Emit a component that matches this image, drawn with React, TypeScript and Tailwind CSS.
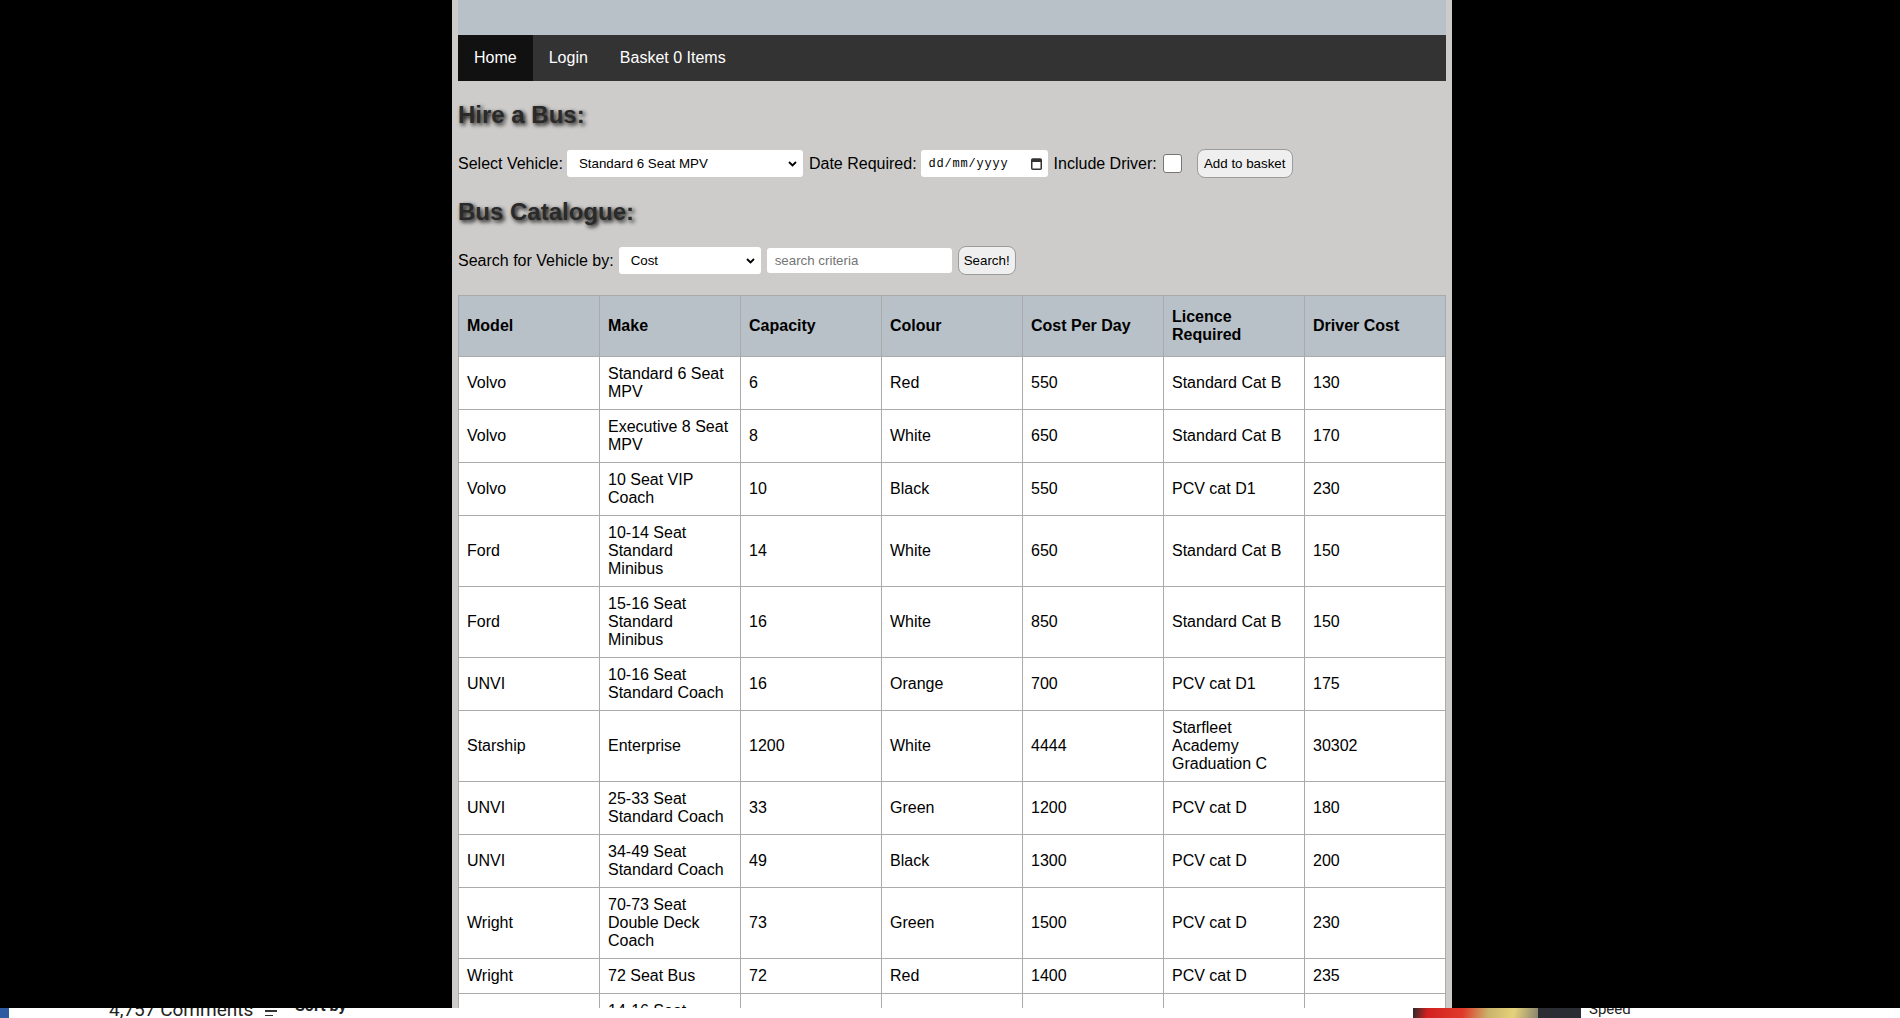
const buses = [
  ["Volvo", "Standard 6 Seat MPV", "6", "Red", "550", "Standard Cat B", "130"],
  ["Volvo", "Executive 8 Seat MPV", "8", "White", "650", "Standard Cat B", "170"],
  ["Volvo", "10 Seat VIP Coach", "10", "Black", "550", "PCV cat D1", "230"],
  ["Ford", "10-14 Seat Standard Minibus", "14", "White", "650", "Standard Cat B", "150"],
  ["Ford", "15-16 Seat Standard Minibus", "16", "White", "850", "Standard Cat B", "150"],
  ["UNVI", "10-16 Seat Standard Coach", "16", "Orange", "700", "PCV cat D1", "175"],
  ["Starship", "Enterprise", "1200", "White", "4444", "Starfleet Academy Graduation C", "30302"],
  ["UNVI", "25-33 Seat Standard Coach", "33", "Green", "1200", "PCV cat D", "180"],
  ["UNVI", "34-49 Seat Standard Coach", "49", "Black", "1300", "PCV cat D", "200"],
  ["Wright", "70-73 Seat Double Deck Coach", "73", "Green", "1500", "PCV cat D", "230"],
  ["Wright", "72 Seat Bus", "72", "Red", "1400", "PCV cat D", "235"],
  ["Ford", "14-16 Seat Standard Minibus", "16", "White", "800", "Standard Cat B", "150"],
];

const headers = ["Model", "Make", "Capacity", "Colour", "Cost Per Day", "Licence Required", "Driver Cost"];

function Chevron() {
  return (
    <svg width="9" height="6" viewBox="0 0 9 6" className="shrink-0">
      <path d="M1 1l3.5 3.5L8 1" fill="none" stroke="#000" strokeWidth="1.8" />
    </svg>
  );
}

function FakeSelect({ value, width }: { value: string; width: string }) {
  return (
    <div className={`${width} h-[27px] bg-white rounded-[3px] flex items-center justify-between pl-3 pr-[6px] text-[13.33px] text-black`}>
      <span>{value}</span>
      <Chevron />
    </div>
  );
}

function Btn({ label, width }: { label: string; width: string }) {
  return (
    <button className={`${width} h-[29px] bg-[#efefef] border border-[#9b9b9b] rounded-[8px] text-[13.33px] text-black flex items-center justify-center`}>
      {label}
    </button>
  );
}

export default function App() {
  return (
    <div className="w-[1900px] h-[1018px] overflow-hidden bg-white font-['Liberation_Sans',Arial,sans-serif]">
      <div className="h-[1008px] bg-black overflow-hidden">
        <div className="ml-[452px] w-[1000px] h-full bg-[#cdccca] px-[6px]">
          <div className="h-[35px] bg-[#b9c1c8]" />
          <nav className="h-[46px] bg-[#333333] flex text-white text-[16px] leading-[18px]">
            <a className="px-4 flex items-center bg-[#111111]">Home</a>
            <a className="px-4 flex items-center">Login</a>
            <a className="px-4 flex items-center">Basket 0 Items</a>
          </nav>

          <h2 className="mt-5 mb-5 text-[24px] leading-[28px] font-bold text-[#2a2a2a] [text-shadow:2px_2px_4px_#000]">
            Hire a Bus:
          </h2>
          <div className="h-[29px] flex items-center text-[16px] text-black">
            <span>Select Vehicle:</span>
            <div className="ml-[4px]">
              <FakeSelect value="Standard 6 Seat MPV" width="w-[236px]" />
            </div>
            <span className="ml-[6px]">Date Required:</span>
            <div className="ml-[4px] w-[127px] h-[27px] bg-white rounded-[3px] flex items-center justify-between pl-[8px] pr-[6px]">
              <span className="font-['Liberation_Mono',monospace] text-[12px] tracking-[0.8px] text-black">dd/mm/yyyy</span>
              <svg width="11" height="12" viewBox="0 0 11 12">
                <rect x="0.75" y="1" width="9.5" height="10.25" rx="1" fill="none" stroke="#333" strokeWidth="1.5" />
                <rect x="0.75" y="1" width="9.5" height="3" fill="#333" />
              </svg>
            </div>
            <span className="ml-[6px]">Include Driver:</span>
            <span className="ml-[6px] w-[19px] h-[19px] bg-white border border-[#767676] rounded-[3px]" />
            <div className="ml-[15px]">
              <Btn label="Add to basket" width="w-[96px]" />
            </div>
          </div>

          <h2 className="mt-5 mb-5 text-[24px] leading-[28px] font-bold text-[#2a2a2a] [text-shadow:2px_2px_4px_#000]">
            Bus Catalogue:
          </h2>
          <div className="h-[29px] flex items-center text-[16px] text-black">
            <span>Search for Vehicle by:</span>
            <div className="ml-[5px]">
              <FakeSelect value="Cost" width="w-[142px]" />
            </div>
            <input
              className="ml-[6px] w-[185px] h-[25px] bg-white rounded-[3px] px-2 text-[13.33px] placeholder:text-[#757575] outline-none"
              placeholder="search criteria"
            />
            <div className="ml-[6px]">
              <Btn label="Search!" width="w-[58px]" />
            </div>
          </div>

          <table className="mt-5 w-[988px] table-fixed border-collapse text-[16px] leading-[18px] text-black">
            <thead>
              <tr className="bg-[#b9c1c8]">
                {headers.map((h) => (
                  <th key={h} className="border border-[#aaaaaa] px-2 py-3 text-left font-bold">
                    {h}
                  </th>
                ))}
              </tr>
            </thead>
            <tbody>
              {buses.map((row, i) => (
                <tr key={i} className="bg-white">
                  {row.map((c, j) => (
                    <td key={j} className="border border-[#aaaaaa] px-2 py-2">
                      {c}
                    </td>
                  ))}
                </tr>
              ))}
            </tbody>
          </table>
        </div>
      </div>

      {/* bit of the page underneath, mostly hidden */}
      <div className="h-[10px] overflow-hidden flex items-start bg-white">
        <div className="w-[265px] shrink-0 flex items-start">
          <div className="w-[9px] h-[10px] bg-[#2d5aa0]" />
          <span className="ml-[100px] mt-[-9px] font-['Roboto',sans-serif] text-[19px] leading-[22px] text-[#222] whitespace-nowrap">
            4,757 Comments
          </span>
        </div>
        <div className="w-[30px] shrink-0 mt-[2px] flex flex-col gap-[3px]">
          <div className="w-[12px] h-[1.5px] bg-[#333]" />
          <div className="w-[8px] h-[1.5px] bg-[#333]" />
        </div>
        <div className="w-[1118px] shrink-0">
          <span className="block mt-[-12px] font-['Roboto',sans-serif] font-bold text-[16px] leading-[20px] text-[#222]">
            Sort by
          </span>
        </div>
        <div className="w-[125px] h-[10px] shrink-0 bg-[linear-gradient(100deg,#2a2a2a_0%,#d32020_12%,#e03a2a_40%,#c9b26a_60%,#e6d27a_80%,#8a8470_100%)]" />
        <div className="w-[43px] h-[10px] shrink-0 bg-[#2a2d33]" />
        <span className="ml-[8px] mt-[-9px] font-['Roboto',sans-serif] text-[15px] leading-[20px] text-[#222]">
          Speed
        </span>
      </div>
    </div>
  );
}
